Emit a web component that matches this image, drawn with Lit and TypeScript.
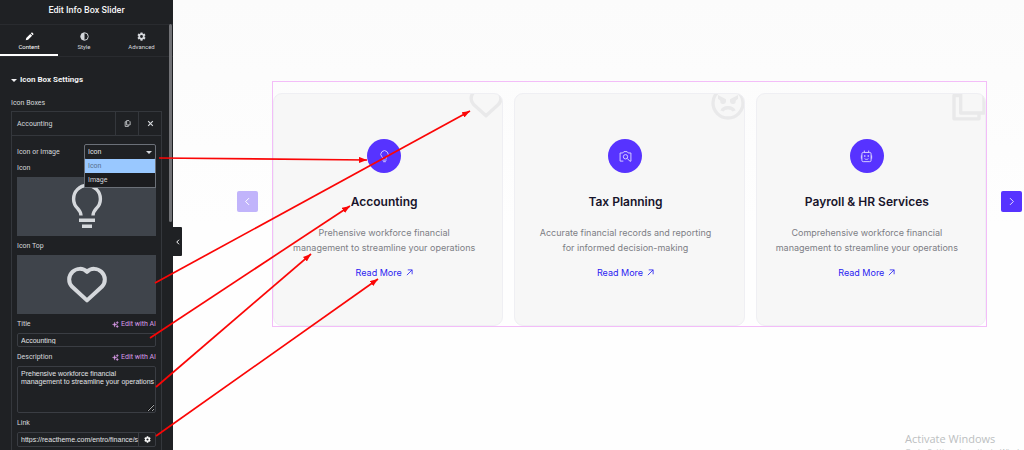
import { LitElement, html, svg, css } from "lit";
import { customElement, property } from "lit/decorators.js";

const bulb = svg`<path d="M9 16.200c0-1.500-.8-2.500-1.700-3.500a6.700 6.700 0 1 1 9.400 0c-.9 1-1.700 2-1.700 3.500M8 18.600h8M9.500 21.600h5" fill="none" stroke="currentColor" stroke-width="1.700"/>`;
const heart = svg`<path d="M12 5.400c-2-2-5.200-1.900-7.200 0-2.200 2.100-2.300 5.300-.2 7.500L12 19.700l7.400-6.800c2.100-2.200 2-5.400-.2-7.500-2-1.900-5.200-2-7.200 0Z" fill="none" stroke="currentColor" stroke-width="2" stroke-linejoin="round"/>`;
const angry = svg`<g fill="none" stroke="currentColor" stroke-width="2"><circle cx="12" cy="12" r="9"/><path d="M8.500 16.800c.8-2.600 6.200-2.600 7 0" stroke-width="2.200"/></g><path d="M6 7.200l4.800 2.600v1.400a1.700 1.700 0 0 1-3.400-.6L6 9.400zM18 7.200l-4.800 2.600v1.400a1.700 1.700 0 0 0 3.400-.6L18 9.400z" fill="currentColor"/>`;
const copies = svg`<path d="M7 7.500H3v14h15v-3.500M7 3h14v15H7z" fill="none" stroke="currentColor" stroke-width="2" stroke-linejoin="round"/>`;
const camera = svg`<g fill="none" stroke="currentColor" stroke-width="1.800"><path d="M8 20.500H2v-15h5l2-2.500h6l2 2.500h5v15h-2"/><circle cx="12" cy="12.500" r="4"/><path d="M15 15.500l5.500 5.500"/></g>`;
const robot = svg`<g fill="none" stroke="currentColor" stroke-width="1.800"><rect x="3.500" y="4.500" width="17" height="17" rx="2.500"/><path d="M8 1v3.500M16 1v3.500M8.500 16c1.500 1.800 5.500 1.800 7 0M2.500 10v6M21.500 10v6"/></g><path d="M7.500 9.500h2.500v3H7.500zM14 9.500h2.500v3H14z" fill="currentColor"/>`;
const pencil = svg`<path d="M2 22l1.300-6.200L14 5l5 5L8.200 20.700zM15.500 3.600L17 2c1-.8 2-.8 3 .1l1.900 1.900c.9 1 .9 2 .1 3l-1.600 1.500z" fill="currentColor"/>`;
const contrast = svg`<circle cx="12" cy="12" r="10" fill="none" stroke="currentColor" stroke-width="2.600"/><path d="M12 2a10 10 0 0 0 0 20z" fill="currentColor"/>`;
const gear = svg`<path fill-rule="evenodd" d="M9.500 1h5l.7 3.200 1.900 1.100 3.200-1 2.400 4.200-2.400 2.300v2.400l2.400 2.300-2.400 4.200-3.200-1-1.900 1.100-.7 3.200h-5l-.7-3.200-1.900-1.100-3.200 1-2.400-4.200 2.400-2.300v-2.400L1.300 8.500l2.400-4.200 3.200 1 1.900-1.100zM12 8.200a3.800 3.800 0 1 0 0 7.600 3.800 3.800 0 0 0 0-7.600z" fill="currentColor"/>`;
const duplicate = svg`<path d="M9 2h8l4 4v11H9zM8 6H4v16h11v-4" fill="none" stroke="currentColor" stroke-width="2.800"/>`;
const cross = svg`<path d="M4 4l16 16M20 4L4 20" fill="none" stroke="currentColor" stroke-width="4"/>`;
const sparkle = svg`<path d="M9 3l2 7 7 2-7 2-2 7-2-7-6-2 6-2zM18 1l1.200 3.300L22.500 5.500l-3.300 1.200L18 10l-1.200-3.300-3.300-1.200 3.300-1.200zM18 14.500l1.200 3 3.300 1.500-3.300 1.200L18 23.500l-1.200-3.300-3.300-1.200 3.300-1.500z" fill="currentColor" stroke="currentColor"/>`;
const upRight = svg`<path d="M3 21L21 3M6 3h15v15" fill="none" stroke="currentColor" stroke-width="2.800"/>`;
const left = svg`<path d="M16 3l-9 9 9 9" fill="none" stroke="currentColor" stroke-width="2.600"/>`;
const right = svg`<path d="M8 3l9 9-9 9" fill="none" stroke="currentColor" stroke-width="2.600"/>`;

const icon = (name: string, shape: unknown) =>
  html`<svg class=${name} viewBox="0 0 24 24" aria-hidden="true">${shape}</svg>`;

@customElement("info-card")
class InfoCard extends LitElement {
  @property() heading = "";
  @property({ attribute: false }) lines: string[] = [];
  @property({ attribute: false }) badge: unknown;
  @property({ attribute: false }) corner: unknown;

  static styles = css`
    :host { display: block; min-width: 0; }
    .card {
      position: relative; overflow: hidden; box-sizing: border-box; height: 100%;
      padding: 45px 16px 45px 8px; border: 1px solid #efeff3; border-radius: 9px;
      background: #f7f7f7; display: flex; flex-direction: column; align-items: center;
      text-align: center; font-family: Inter, sans-serif;
    }
    .corner { position: absolute; top: -11px; right: -4px; width: 40px; height: 40px; color: #e9e9ea; }
    .badge { width: 34px; height: 34px; border-radius: 50%; background: #5733ff; color: #d9d2ff; display: grid; place-items: center; }
    .glyph { width: 13px; height: 13px; }
    h3 { margin: 20px 0 14px; font-size: 12px; line-height: 18px; font-weight: 600; color: #17142b; }
    p { margin: 0; font-size: 9px; line-height: 15px; color: #7d7e85; }
    a { display: flex; align-items: center; gap: 4px; margin-top: 10px; font-size: 9px; line-height: 15px; color: #2a22f2; text-decoration: none; }
    .go { width: 7px; height: 7px; }
  `;

  render() {
    return html`<article class="card">
      ${icon("corner", this.corner)}
      <div class="badge">${icon("glyph", this.badge)}</div>
      <h3>${this.heading}</h3>
      <p>${this.lines[0]}<br />${this.lines[1]}</p>
      <a href="#">Read More ${icon("go", upRight)}</a>
    </article>`;
  }
}

@customElement("edit-panel")
class EditPanel extends LitElement {
  static styles = css`
    :host { display: block; position: relative; width: 173px; flex: none; background: #1f2124; color: #d5d8dc; font: 7px/10px Roboto, sans-serif; }
    * { box-sizing: border-box; }
    svg { display: block; }
    button { font: inherit; color: inherit; background: none; border: 0; padding: 0; }
    .panel { height: 100vh; overflow: hidden; }
    h1 { margin: 0; height: 24px; padding-top: 4px; font-size: 9px; line-height: 12px; font-weight: 500; text-align: center; color: #f4f4f5; }
    .tabs { display: grid; grid-template-columns: 58px 52px 1fr; border-top: 1px solid #292b2f; border-bottom: 1px solid #292b2f; height: 33px; }
    .tab { display: flex; flex-direction: column; align-items: center; gap: 2px; padding-top: 7px; font-size: 6px; line-height: 8px; border-bottom: 2px solid transparent; }
    .tab.on { color: #fff; border-color: #fff; }
    .tab-icon { width: 9px; height: 9px; }
    h2 { display: flex; align-items: center; gap: 3px; margin: 17px 0 0 11px; font-size: 8px; line-height: 12px; font-weight: 700; color: #f0f0f1; }
    .caret { border: 3px solid transparent; border-top-color: currentColor; border-bottom: 0; }
    .caption { margin: 12px 0 3px 11px; }
    .item { margin: 0 11px; border: 1px solid #34373c; }
    .bar { display: grid; grid-template-columns: 1fr 23px 23px; height: 24px; border-bottom: 1px solid #34373c; }
    .name { padding-left: 5px; text-align: left; }
    .tool { display: grid; place-items: center; border-left: 1px solid #34373c; }
    .small { width: 7px; height: 7px; }
    .body { padding: 8px 5px; }
    .row { display: flex; justify-content: space-between; align-items: center; }
    .picker { position: relative; width: 72px; }
    select, input, textarea { display: block; width: 100%; margin: 0; font: inherit; color: #e2e4e7; background: #1f2124; border: 1px solid #3a3d43; border-radius: 2px; outline: 0; }
    input, textarea { font-family: "Liberation Sans", sans-serif; }
    select { appearance: none; height: 16px; padding: 0 3px; border-color: #6b7078; }
    .drop { position: absolute; right: 4px; top: 7px; }
    .menu { position: absolute; z-index: 1; top: 15px; left: 0; right: 0; margin: 0; padding: 0; list-style: none; border: 1px solid #6b7078; border-top: 0; background: #1b1c1f; line-height: 14px; }
    .menu li { padding-left: 3px; }
    .menu .on { background: #99c8ff; color: #57718e; }
    .preview { display: grid; place-items: center; width: 100%; height: 59px; background: #3f444b; color: #d5d8dc; }
    .large { width: 48px; height: 48px; }
    .field { margin: 5px 0 4px; }
    .first { margin-top: 3px; }
    .ai { display: flex; align-items: center; gap: 2px; color: #d89be8; }
    input { height: 14px; padding: 0 3px; }
    textarea { height: 47px; padding: 3px 0 3px 3px; line-height: 8px; resize: vertical; overflow: hidden; }
    .link { display: grid; grid-template-columns: 1fr 17px; border: 1px solid #3a3d43; border-radius: 2px; height: 15px; }
    .link input { border: 0; height: 13px; min-width: 0; padding-right: 0; }
    .link .tool { color: #fff; border-left: 1px solid #3a3d43; }
    .scroll { position: absolute; top: 24px; right: 1px; width: 3px; height: 198px; border-radius: 2px; background: #717276; }
    .collapse { position: absolute; top: 227px; left: 100%; width: 9px; height: 29px; background: #1f2124; display: grid; place-items: center; border-radius: 0 1px 1px 0; color: #fff; }
    .chev { width: 6px; height: 6px; }
    .chev path { stroke-width: 4px; }
  `;

  private ai() {
    return html`<button class="ai">${icon("small", sparkle)}Edit with AI</button>`;
  }

  render() {
    return html`
      <div class="panel">
        <h1>Edit Info Box Slider</h1>
        <nav class="tabs">
          <button class="tab on">${icon("tab-icon", pencil)}Content</button>
          <button class="tab">${icon("tab-icon", contrast)}Style</button>
          <button class="tab">${icon("tab-icon", gear)}Advanced</button>
        </nav>
        <h2><span class="caret"></span>Icon Box Settings</h2>
        <div class="caption">Icon Boxes</div>
        <section class="item">
          <div class="bar">
            <button class="name">Accounting</button>
            <button class="tool" aria-label="Duplicate">${icon("small", duplicate)}</button>
            <button class="tool" aria-label="Remove">${icon("small", cross)}</button>
          </div>
          <div class="body">
            <div class="row">
              <label for="kind">Icon or Image</label>
              <div class="picker">
                <select id="kind"><option selected>Icon</option><option>Image</option></select>
                <span class="caret drop"></span>
                <ul class="menu"><li class="on">Icon</li><li>Image</li></ul>
              </div>
            </div>
            <div class="field first">Icon</div>
            <button class="preview" aria-label="Icon">${icon("large", bulb)}</button>
            <div class="field">Icon Top</div>
            <button class="preview" aria-label="Icon Top">${icon("large", heart)}</button>
            <div class="row field"><label for="title">Title</label>${this.ai()}</div>
            <input id="title" .value=${"Accounting"} />
            <div class="row field"><label for="desc">Description</label>${this.ai()}</div>
            <textarea id="desc" .value=${"Prehensive workforce financial management to streamline your operations"}></textarea>
            <div class="field"><label for="link">Link</label></div>
            <div class="link">
              <input id="link" .value=${"https://reactheme.com/entro/finance/si"} />
              <button class="tool" aria-label="Link options">${icon("small", gear)}</button>
            </div>
          </div>
        </section>
      </div>
      <div class="scroll"></div>
      <button class="collapse" aria-label="Collapse panel">${icon("chev", left)}</button>
    `;
  }
}

const cards = [
  { heading: "Accounting", lines: ["Prehensive workforce financial", "management to streamline your operations"], badge: bulb, corner: heart },
  { heading: "Tax Planning", lines: ["Accurate financial records and reporting", "for informed decision-making"], badge: camera, corner: angry },
  { heading: "Payroll & HR Services", lines: ["Comprehensive workforce financial", "management to streamline your operations"], badge: robot, corner: copies },
];

const arrows = [
  [159, 158, 367, 160],
  [155, 283, 470, 111],
  [150, 338, 350, 206],
  [156, 387, 311, 254],
  [156, 436, 378, 279],
];

@customElement("app-root")
class AppRoot extends LitElement {
  static styles = css`
    :host { display: block; }
    .page { position: relative; display: flex; height: 100vh; overflow: hidden; background: linear-gradient(#fbfbfb, #fefefe 50%, #fefefe); }
    .canvas { flex: 1; min-width: 0; padding: 81px 2px 0 64px; }
    .slider { display: flex; align-items: center; gap: 14px; }
    .nav { flex: none; width: 21px; height: 21px; padding: 0; margin: 0 0 5px; border: 0; border-radius: 2px; background: #5733ff; color: #e5dfff; display: grid; place-items: center; }
    .nav.off { background: #c1b4fb; color: #fff; }
    .chev { width: 9px; height: 9px; }
    .widget { flex: 1; min-width: 0; display: grid; grid-template-columns: repeat(3, 1fr); gap: 11px; padding-top: 11px; border: 1px solid #f3bdf8; }
    .marks { position: absolute; inset: 0; width: 100%; height: 100%; pointer-events: none; }
    .notice { position: absolute; left: calc(100% - 119px); top: calc(100% - 18px); white-space: nowrap; color: #bcbec1; font: 11px/14px "Open Sans", sans-serif; }
    .hint { font-size: 8px; line-height: 10px; }
  `;

  render() {
    return html`<div class="page">
      <edit-panel></edit-panel>
      <main class="canvas">
        <div class="slider">
          <button class="nav off" aria-label="Previous">${icon("chev", left)}</button>
          <div class="widget">
            ${cards.map((c) => html`<info-card .heading=${c.heading} .lines=${c.lines} .badge=${c.badge} .corner=${c.corner}></info-card>`)}
          </div>
          <button class="nav" aria-label="Next">${icon("chev", right)}</button>
        </div>
      </main>
      <div class="notice">Activate Windows<div class="hint">Go to Settings to activate Windows.</div></div>
      <svg class="marks" aria-hidden="true">
        <defs><marker id="head" viewBox="0 0 8 6" refX="8" refY="3" markerWidth="8" markerHeight="6" markerUnits="userSpaceOnUse" orient="auto"><path d="M0 0L8 3L0 6z" fill="#fb0606" /></marker></defs>
        ${arrows.map(([x1, y1, x2, y2]) => svg`<line x1=${x1} y1=${y1} x2=${x2} y2=${y2} stroke="#fb0606" stroke-width="1.700" marker-end="url(#head)"/>`)}
      </svg>
    </div>`;
  }
}
